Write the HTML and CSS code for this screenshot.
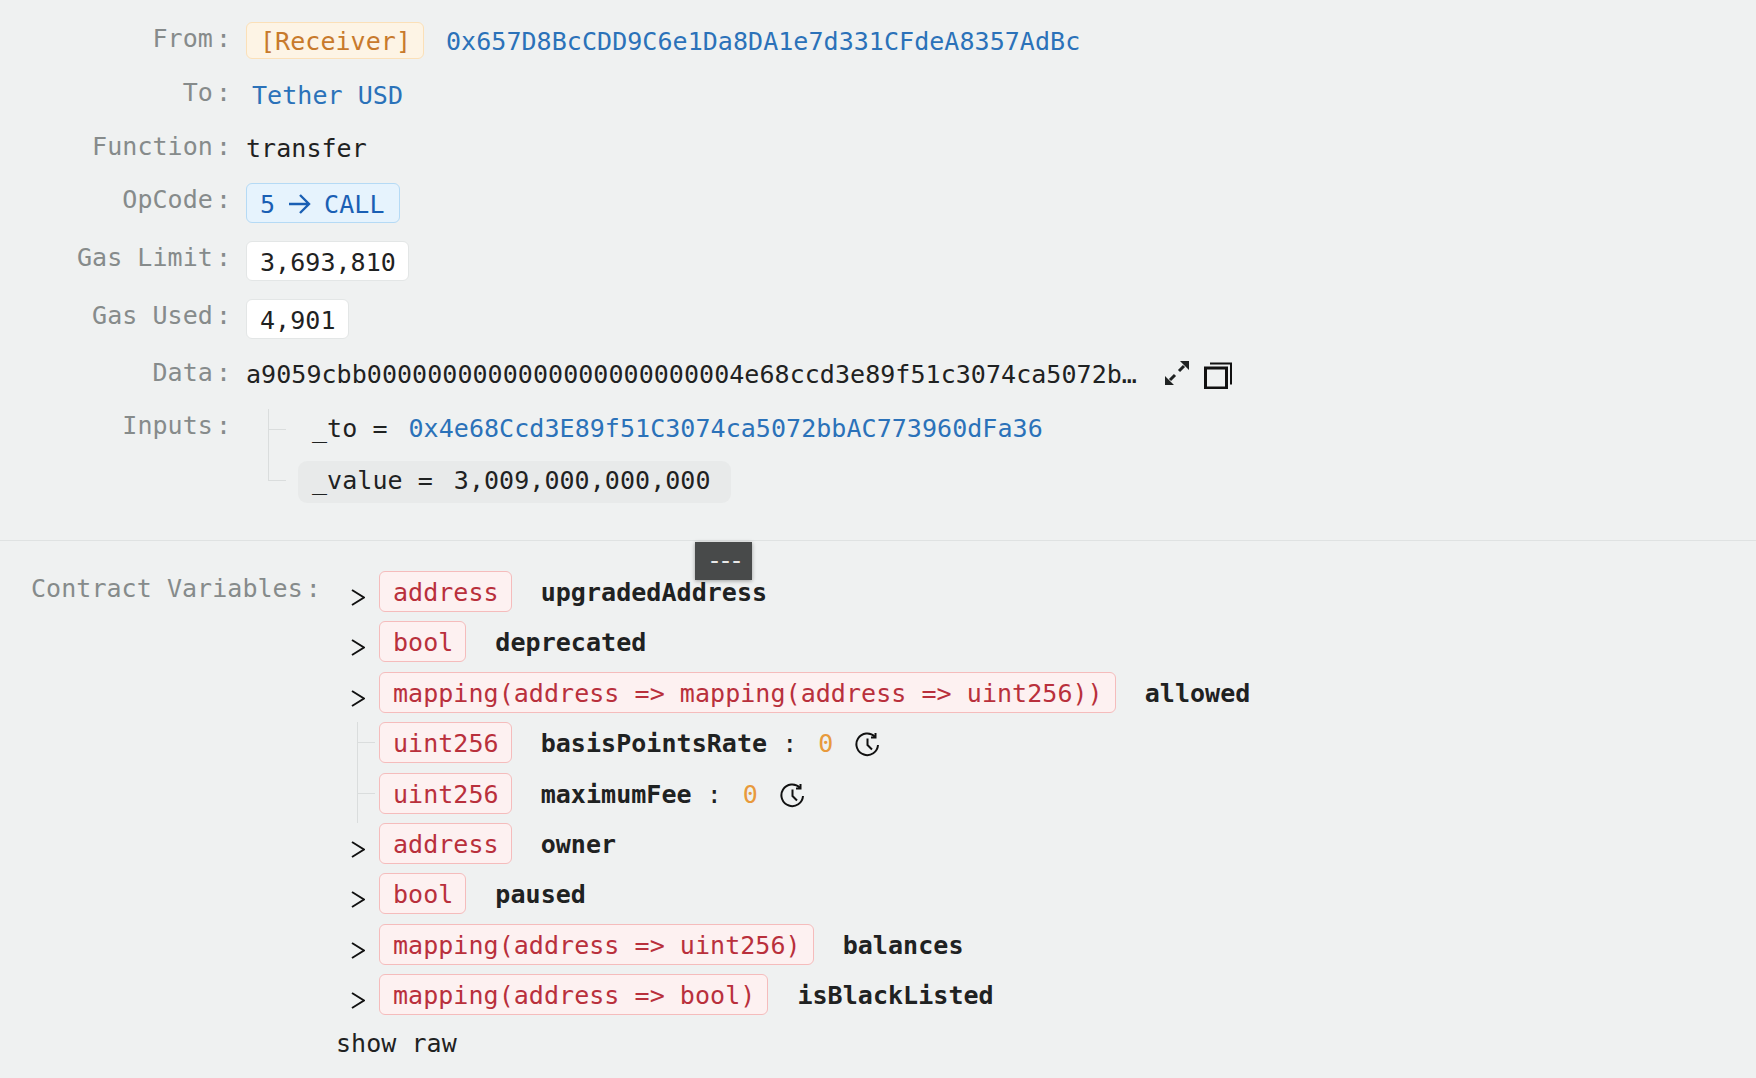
FILE: index.html
```html
<!DOCTYPE html>
<html lang="en">
<head>
    <meta charset="UTF-8">
    <meta name="viewport" content="width=device-width, initial-scale=1.0">
    <title>Call Details</title>
    <link rel="stylesheet" href="styles.css">
</head>
<body>
    <section class="details">
        <div class="row">
            <div class="label">From</div>
            <span class="pill pill-orange">[Receiver]</span>
            <a class="link addr">0x657D8BcCDD9C6e1Da8DA1e7d331CFdeA8357AdBc</a>
        </div>
        <div class="row">
            <div class="label">To</div>
            <a class="link to-link">Tether USD</a>
        </div>
        <div class="row row-short">
            <div class="label">Function</div>
            <span class="value">transfer</span>
        </div>
        <div class="row">
            <div class="label">OpCode</div>
            <span class="pill pill-blue"><span>5</span><svg class="arrow" viewBox="0 0 23 22" width="23" height="22"><path d="M1 11h20M12 2l9 9-9 9"/></svg><span>CALL</span></span>
        </div>
        <div class="row row-gas">
            <div class="label">Gas Limit</div>
            <span class="pill pill-white">3,693,810</span>
        </div>
        <div class="row row-gas">
            <div class="label">Gas Used</div>
            <span class="pill pill-white">4,901</span>
        </div>
        <div class="row">
            <div class="label">Data</div>
            <span class="value">a9059cbb0000000000000000000000004e68ccd3e89f51c3074ca5072b…</span>
            <svg class="expand" viewBox="0 0 26 26" width="26" height="26"><path d="M15 11l5-5M11 15l-5 5"/><path class="solid" d="M16 1h9v9zM1 16v9h9z"/></svg>
            <svg class="copy" viewBox="0 0 28 27" width="28" height="27"><path class="front" d="M1.500 6h21v20h-21z"/><path d="M6 1.500h21v21"/></svg>
        </div>
        <div class="row row-inputs">
            <div class="label">Inputs</div>
            <div class="inputs">
                <div class="input">
                    <i class="tick"></i>
                    <div class="input-body"><span>_to =</span><a class="link eq">0x4e68Ccd3E89f51C3074ca5072bbAC773960dFa36</a></div>
                </div>
                <div class="input">
                    <i class="tick tick-last"></i>
                    <div class="input-body input-hover"><span>_value =</span><span class="eq">3,009,000,000,000</span></div>
                </div>
            </div>
        </div>
    </section>

    <section class="vars">
        <div class="tooltip">---</div>
        <div class="label vars-label">Contract Variables</div>
        <div class="var-list">
            <div class="var">
                <svg class="chev" viewBox="0 0 14 17" width="14" height="17"><path d="M1 1l12 7.500-12 7.500"/></svg>
                <span class="pill pill-red">address</span><b>upgradedAddress</b>
            </div>
            <div class="var">
                <svg class="chev" viewBox="0 0 14 17" width="14" height="17"><path d="M1 1l12 7.500-12 7.500"/></svg>
                <span class="pill pill-red">bool</span><b>deprecated</b>
            </div>
            <div class="var">
                <svg class="chev" viewBox="0 0 14 17" width="14" height="17"><path d="M1 1l12 7.500-12 7.500"/></svg>
                <span class="pill pill-red">mapping(address =&gt; mapping(address =&gt; uint256))</span><b>allowed</b>
            </div>
            <div class="var">
                <i class="tick var-tick"></i>
                <span class="pill pill-red">uint256</span><b>basisPointsRate</b><span class="colon">:</span><span class="zero">0</span>
                <svg class="clock" viewBox="0 0 25 25" width="25" height="25"><path d="M23 13A10.800 10.800 0 1 1 20 4.800"/><path d="M20.500 1v4.500H16"/><path d="M12.500 6.500v6.500l4.500 4.500"/></svg>
            </div>
            <div class="var">
                <i class="tick var-tick"></i>
                <span class="pill pill-red">uint256</span><b>maximumFee</b><span class="colon">:</span><span class="zero">0</span>
                <svg class="clock" viewBox="0 0 25 25" width="25" height="25"><path d="M23 13A10.800 10.800 0 1 1 20 4.800"/><path d="M20.500 1v4.500H16"/><path d="M12.500 6.500v6.500l4.500 4.500"/></svg>
            </div>
            <div class="var">
                <svg class="chev" viewBox="0 0 14 17" width="14" height="17"><path d="M1 1l12 7.500-12 7.500"/></svg>
                <span class="pill pill-red">address</span><b>owner</b>
            </div>
            <div class="var">
                <svg class="chev" viewBox="0 0 14 17" width="14" height="17"><path d="M1 1l12 7.500-12 7.500"/></svg>
                <span class="pill pill-red">bool</span><b>paused</b>
            </div>
            <div class="var">
                <svg class="chev" viewBox="0 0 14 17" width="14" height="17"><path d="M1 1l12 7.500-12 7.500"/></svg>
                <span class="pill pill-red">mapping(address =&gt; uint256)</span><b>balances</b>
            </div>
            <div class="var">
                <svg class="chev" viewBox="0 0 14 17" width="14" height="17"><path d="M1 1l12 7.500-12 7.500"/></svg>
                <span class="pill pill-red">mapping(address =&gt; bool)</span><b>isBlackListed</b>
            </div>
            <div class="show-raw">show raw</div>
        </div>
    </section>
</body>
</html>
```
FILE: styles.css
```css
body {
    margin: 0;
    height: 1078px;
    overflow: hidden;
    background-color: #eff1f1;
    color: #1f2222;
    font-family: "DejaVu Sans Mono", "Liberation Mono", monospace;
    font-size: 25px;
    letter-spacing: 0.05px;
}
svg {
    fill: none;
    stroke: currentColor;
    stroke-width: 2;
    flex: none;
}
.details {
    display: flex;
    flex-direction: column;
    gap: 17px;
    padding: 22px 0 37px;
    border-bottom: 1px solid #dfe2e2;
}
.row {
    display: flex;
    align-items: center;
    min-height: 37px;
}
.row-short {
    min-height: 36px;
}
.row-gas {
    margin-top: 1px;
}
.row-inputs {
    align-items: flex-start;
    margin-top: -1px;
}
.label {
    flex: none;
    align-self: flex-start;
    width: 231px;
    margin-right: 15px;
    color: #868b8b;
    line-height: 33px;
    text-align: right;
    white-space: nowrap;
}
.label::after {
    content: ":";
    margin-left: 3px;
}
.pill {
    display: inline-flex;
    align-items: center;
    flex: none;
    box-sizing: border-box;
    height: 40px;
    padding: 2px 12px 0 13px;
    border: 1px solid;
    border-radius: 6px;
    white-space: pre;
}
.pill-orange {
    height: 37px;
    background-color: #fdf4e5;
    border-color: #fbe0b8;
    color: #c87a2c;
}
.pill-blue {
    gap: 13px;
    padding-right: 14px;
    background-color: #e6f3fd;
    border-color: #b5daf5;
    color: #1a5fb4;
}
.pill-white {
    background-color: #fff;
    border-color: #e3e6e6;
}
.pill-red {
    height: 41px;
    background-color: #fdf1f1;
    border-color: #f5bcbc;
    color: #b9303c;
}
.arrow path {
    stroke-width: 2.4;
}
.link {
    color: #2b72b9;
}
.addr {
    margin-left: 22px;
    padding-top: 2px;
}
.to-link {
    margin-left: 6px;
    padding-top: 2px;
}
.value {
    white-space: nowrap;
}
.expand {
    margin-left: 27px;
    margin-top: -3px;
}
.expand path {
    stroke-width: 3;
}
.expand .solid {
    fill: currentColor;
    stroke: none;
}
.copy {
    margin-left: 14px;
    margin-top: 1px;
    color: #111;
}
.copy .front {
    stroke-width: 3;
}
.inputs {
    margin-left: 22px;
}
.input {
    display: flex;
}
.tick {
    flex: none;
    display: block;
    width: 17px;
    border-left: 1px solid #dadddd;
}
.tick::after {
    content: "";
    display: block;
    height: 20px;
    border-bottom: 1px solid #dadddd;
}
.tick-last {
    align-self: flex-start;
    height: 20px;
}
.tick-last::after {
    height: 19px;
}
.input-body {
    display: flex;
    align-items: center;
    box-sizing: border-box;
    height: 42px;
    margin: 0 0 10px 12px;
    padding: 0 20px 4px 14px;
    border-radius: 9px;
    white-space: pre;
}
.input:last-child .input-body {
    margin-bottom: 0;
}
.input-hover {
    background-color: #e8eaea;
}
.eq {
    margin-left: 21px;
}
.vars {
    position: relative;
    display: flex;
    align-items: flex-start;
    padding: 30px 0 0 31px;
}
.vars-label {
    width: auto;
    margin-top: 1px;
    margin-right: 15px;
}
.var-list {
    display: flex;
    flex-direction: column;
}
.var {
    display: flex;
    align-items: flex-start;
    height: 50.4px;
    padding-left: 43px;
    white-space: pre;
}
.var b {
    margin-left: 29px;
    line-height: 43px;
    font-weight: bold;
}
.chev {
    margin: 18px 14px 0 -28px;
    color: #111;
}
.var-tick {
    align-self: stretch;
    margin-left: -22px;
    margin-right: 4px;
}
.colon {
    margin-left: 15px;
    line-height: 43px;
}
.zero {
    margin-left: 21px;
    line-height: 43px;
    color: #e89a3c;
}
.clock {
    margin: 10px 0 0 22px;
    color: #111;
}
.show-raw {
    margin-top: 2px;
    line-height: 33px;
}
.tooltip {
    position: absolute;
    left: 695px;
    top: 1px;
    width: 57px;
    height: 38px;
    background-color: #484a4a;
    box-shadow: 0 1px 4px rgba(0, 0, 0, 0.35);
    color: #e8e8e8;
    font-size: 25px;
    line-height: 38px;
    text-align: center;
    letter-spacing: -4px;
}
```
